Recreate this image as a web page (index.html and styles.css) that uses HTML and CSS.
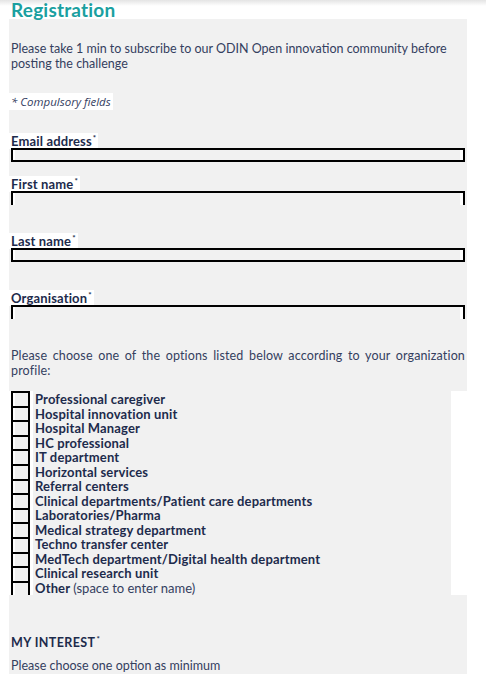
FILE: index.html
```html
<!DOCTYPE html>
<html lang="en">
<head>
<meta charset="utf-8">
<title>Registration</title>
<link rel="stylesheet" href="styles.css">
</head>
<body>
<header class="top">
  <h1 class="title">Registration</h1>
</header>
<main class="panel">
  <p class="intro">Please take 1 min to subscribe to our ODIN Open innovation community before posting the challenge</p>
  <div class="note">* Compulsory fields</div>

  <div class="field field-email">
    <label class="label">Email address<sup>*</sup></label>
    <div class="input"></div>
  </div>
  <div class="field field-first">
    <label class="label">First name<sup>*</sup></label>
    <div class="input input-open"></div>
  </div>
  <div class="field field-last">
    <label class="label">Last name<sup>*</sup></label>
    <div class="input"></div>
  </div>
  <div class="field field-org">
    <label class="label">Organisation<sup>*</sup></label>
    <div class="input input-open"></div>
  </div>

  <p class="choose">Please choose one of the options listed below according to your organization profile:</p>

  <div class="checklist">
    <div class="boxes">
      <span class="box"></span><span class="box"></span><span class="box"></span><span class="box"></span>
      <span class="box"></span><span class="box"></span><span class="box"></span><span class="box"></span>
      <span class="box"></span><span class="box"></span><span class="box"></span><span class="box"></span>
      <span class="box"></span><span class="box"></span>
    </div>
    <ul class="options">
      <li>Professional caregiver</li>
      <li>Hospital innovation unit</li>
      <li>Hospital Manager</li>
      <li>HC professional</li>
      <li>IT department</li>
      <li>Horizontal services</li>
      <li>Referral centers</li>
      <li>Clinical departments/Patient care departments</li>
      <li>Laboratories/Pharma</li>
      <li>Medical strategy department</li>
      <li>Techno transfer center</li>
      <li>MedTech department/Digital health department</li>
      <li>Clinical research unit</li>
      <li>Other <span class="light">(space to enter name)</span></li>
    </ul>
  </div>

  <h2 class="interest">MY INTEREST<sup>*</sup></h2>
  <p class="minimum">Please choose one option as minimum</p>
</main>
</body>
</html>
```

FILE: styles.css
```css
* { box-sizing: border-box; }

html, body {
  margin: 0;
  padding: 0;
  background: #ffffff;
}

body {
  font-family: Lato, "Open Sans", sans-serif;
  font-size: 12.5px;
  color: #34405f;
  overflow: hidden;
}

.top {
  height: 19px;
  padding-top: 1px;
  background: linear-gradient(#e4e4e4, #ffffff 6px);
}

.title {
  margin: 0 0 0 11px;
  font-size: 19px;
  line-height: 17px;
  font-weight: 700;
  color: #1aa0a0;
  letter-spacing: 0.2px;
}

.panel {
  margin-left: 9px;
  width: 458px;
  background: #f1f1f1;
  padding: 22px 2px 1px 2px;
}

.intro {
  margin: 0;
  line-height: 15px;
}

.note {
  display: inline-block;
  margin: 22px 0 0 -2px;
  padding: 0 2px 0 2px;
  background: #ffffff;
  line-height: 17px;
  font-family: "Open Sans", sans-serif;
  font-style: italic;
  font-size: 11.5px;
  color: #34405f;
}

.field { display: flex; flex-direction: column; align-items: flex-start; }
.field-email { margin-top: 23px; }
.field-first { margin-top: 14px; }
.field-last { margin-top: 28px; }
.field-org { margin-top: 28px; }

.label {
  display: block;
  margin-left: -2px;
  padding: 0 2px;
  background: #ffffff;
  font-weight: 700;
  font-size: 13px;
  letter-spacing: 0.15px;
  line-height: 16px;
  color: #1d2b4c;
}

.label sup, .interest sup {
  font-size: 8px;
  vertical-align: 5px;
  line-height: 0;
  margin-left: 1px;
}

.input {
  margin-top: -1px;
  width: 454px;
  height: 14px;
  border: 2px solid #000000;
  background: #f1f1f1;
  box-shadow: inset 2px 0 #ffffff, inset -3px 0 #ffffff;
}

.input-open {
  border-bottom: none;
}

.choose {
  margin: 29px 0 0 0;
  line-height: 15px;
  text-align: justify;
  letter-spacing: 0.15px;
}

.checklist {
  margin: 13px -2px 0 -2px;
  height: 204px;
  background: #ffffff;
  display: flex;
  padding-left: 2px;
  overflow: hidden;
}

.boxes {
  display: flex;
  flex-direction: column;
  width: 19px;
}

.box {
  display: block;
  height: 14.6px;
  flex: none;
  border: 2px solid #000000;
  border-bottom: none;
  background: #f1f1f1;
  box-shadow: inset 2px 0 #ffffff;
}

.options {
  list-style: none;
  margin: 0 0 0 3px;
  padding: 1px 0 0 2px;
  width: 418px;
  background: #f1f1f1;
}

.options li {
  height: 14.5px;
  line-height: 14.5px;
  font-weight: 700;
  font-size: 13px;
  letter-spacing: 0.15px;
  color: #1d2b4c;
  white-space: nowrap;
}

.light {
  font-weight: 400;
  color: #34405f;
  letter-spacing: 0;
}

.interest {
  margin: 40px 0 0 0;
  font-size: 12.5px;
  line-height: 16px;
  font-weight: 700;
  letter-spacing: 0.4px;
  color: #1d2b4c;
}

.minimum {
  margin: 7px 0 0 0;
  line-height: 15px;
}
```
